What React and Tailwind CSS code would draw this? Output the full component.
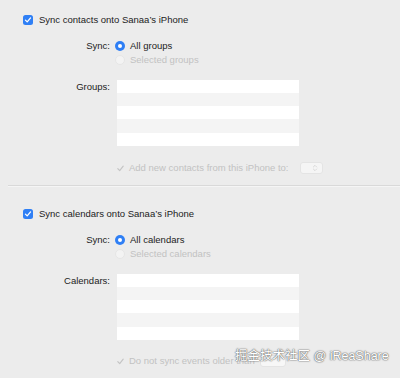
import { ChevronsUpDown } from 'lucide-react';

const font = { fontFamily: '"Liberation Sans", Arial, sans-serif' };

const CheckBox = ({ disabled = false }) =>
  disabled ? (
    <span className="w-[10px] h-[10px] rounded-[2px] flex items-center justify-center">
      <svg viewBox="0 0 10 10" className="w-[9px] h-[9px]">
        <path d="M2 5.2 L4.1 7.4 L8 2.4" fill="none" stroke="#c4c4c4" strokeWidth="1.3" strokeLinecap="round" strokeLinejoin="round" />
      </svg>
    </span>
  ) : (
    <span className="w-[10px] h-[10px] rounded-[2.5px] bg-[#2f7ff5] flex items-center justify-center">
      <svg viewBox="0 0 10 10" className="w-[8px] h-[8px]">
        <path d="M1.8 5.2 L4 7.4 L8.2 2.4" fill="none" stroke="#fff" strokeWidth="1.6" strokeLinecap="round" strokeLinejoin="round" />
      </svg>
    </span>
  );

const Radio = ({ on }) =>
  on ? (
    <span className="w-[10px] h-[10px] rounded-full bg-[#2f7ff5] flex items-center justify-center">
      <span className="w-[4px] h-[4px] rounded-full bg-white" />
    </span>
  ) : (
    <span className="w-[10px] h-[10px] rounded-full bg-[#f3f3f3] border border-[#e6e6e6]" />
  );

const Row = ({ label, className = '', children }) => (
  <div className={`flex ${className}`}>
    <div className="w-[110px] shrink-0 text-right text-[#222]">{label}</div>
    <div className="ml-[5px] flex-1">{children}</div>
  </div>
);

const ListBox = () => (
  <div className="ml-[2px] w-[182px] h-[66px] flex flex-col">
    <div className="h-[13px] bg-white" />
    <div className="h-[13px] bg-[#f4f4f4]" />
    <div className="h-[13px] bg-white" />
    <div className="h-[14px] bg-[#f4f4f4]" />
    <div className="h-[13px] bg-white" />
  </div>
);

const Section = ({ title, all, selected, listLabel, footer }) => (
  <div className="flex flex-col">
    <div className="flex items-center h-[10px] pl-[23px] gap-[6px] text-[#222]">
      <CheckBox />
      <span className="leading-none">{title}</span>
    </div>
    <Row label="Sync:" className="mt-[16px] h-[10px] items-center leading-none">
      <div className="flex items-center gap-[5px] text-[#222]">
        <Radio on />
        <span>{all}</span>
      </div>
    </Row>
    <Row label="" className="mt-[4px] h-[10px] items-center leading-none">
      <div className="flex items-center gap-[5px] text-[#c2c2c2]">
        <Radio />
        <span>{selected}</span>
      </div>
    </Row>
    <Row label={<span className="block pt-[2px]">{listLabel}</span>} className="mt-[15px] leading-none">
      <ListBox />
    </Row>
    {footer}
  </div>
);

export default function App() {
  return (
    <div className="relative w-[400px] h-[378px] bg-[#ececec] overflow-hidden text-[9.5px]" style={font}>
      <div className="pt-[15px]">
        <Section
          title="Sync contacts onto Sanaa’s iPhone"
          all="All groups"
          selected="Selected groups"
          listLabel="Groups:"
          footer={
            <Row label="" className="mt-[16px] h-[12px] items-center leading-none">
              <div className="flex items-center text-[#c2c2c2]">
                <CheckBox disabled />
                <span className="ml-[4px]">Add new contacts from this iPhone to:</span>
                <span className="ml-[12px] w-[23px] h-[12px] rounded-[3px] bg-[#f5f5f5] border border-[#e4e4e4] flex items-center justify-end pr-[3px]">
                  <ChevronsUpDown size={8} strokeWidth={1.5} className="text-[#bcbcbc]" />
                </span>
              </div>
            </Row>
          }
        />
        <div className="mt-[11px] ml-[8px] h-[1px] bg-[#d9d9d9]" />
        <div className="ml-[8px] h-[1px] bg-[#f5f5f5]" />
        <div className="mt-[22px]">
          <Section
            title="Sync calendars onto Sanaa’s iPhone"
            all="All calendars"
            selected="Selected calendars"
            listLabel="Calendars:"
            footer={
              <Row label="" className="mt-[15px] h-[12px] items-center leading-none">
                <div className="flex items-center text-[#c2c2c2]">
                  <CheckBox disabled />
                  <span className="ml-[4px]">Do not sync events older than</span>
                  <span className="ml-[5px] w-[26px] h-[12px] rounded-[3px] bg-[#f7f7f7] border border-[#e4e4e4]" />
                </div>
              </Row>
            }
          />
        </div>
      </div>
      <div
        className="absolute left-[235px] top-[350px] text-[12.5px] leading-none text-white whitespace-nowrap"
        style={{
          fontFamily: '"Liberation Sans", "Noto Sans CJK SC", sans-serif',
          textShadow: '0 0 1px #6b6b6b, 0 0 1px #6b6b6b, 0 0 2px #8a8a8a',
        }}
      >
        掘金技术社区 @ iReaShare
      </div>
    </div>
  );
}
